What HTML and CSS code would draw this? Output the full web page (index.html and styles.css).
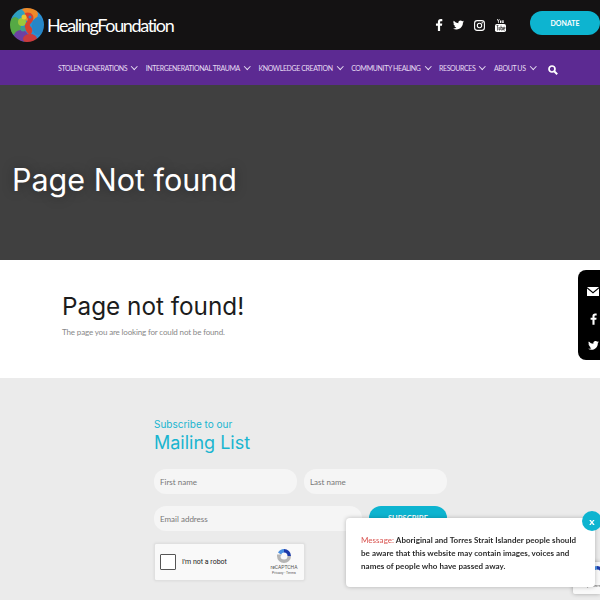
FILE: index.html
```html
<!DOCTYPE html>
<html lang="en">
<head>
    <meta charset="UTF-8">
    <meta name="viewport" content="width=device-width, initial-scale=1.0">
    <title>Page Not found</title>
    <link rel="stylesheet" href="styles.css">
</head>
<body>

    <header class="top-bar">
        <div class="logo">
            <svg class="logo-mark" width="34" height="34" viewBox="0 0 34 34">
                <defs>
                    <filter id="soft"><feGaussianBlur stdDeviation="0.5"/></filter>
                    <clipPath id="disc"><circle cx="17" cy="17" r="17"/></clipPath>
                </defs>
                <g clip-path="url(#disc)" filter="url(#soft)">
                    <rect width="34" height="34" fill="#2b8fd3"/>
                    <ellipse cx="19" cy="6" rx="9" ry="7" fill="#ee8a2c"/>
                    <ellipse cx="9" cy="7" rx="6" ry="6" fill="#2f9fc0"/>
                    <ellipse cx="5" cy="18" rx="6" ry="9" fill="#55a945"/>
                    <ellipse cx="12" cy="14" rx="4" ry="4" fill="#9cc63c"/>
                    <ellipse cx="11" cy="28" rx="7" ry="6" fill="#6d3fa3"/>
                    <ellipse cx="20" cy="31" rx="7" ry="5" fill="#c93a3c"/>
                    <ellipse cx="28" cy="18" rx="6" ry="9" fill="#2586c8"/>
                    <path d="M15 5C20 3 25 7 23 12C22 15 19 16 20 18C23 20 23 25 20 27C17 25 14 21 15 17C16 14 18 13 18 11C17 9 15 8 15 5Z" fill="#d8402f"/>
                    <circle cx="14" cy="9" r="2.500" fill="#e8c934"/>
                    <circle cx="20" cy="9" r="1.500" fill="#2f86c9"/>
                    <circle cx="13" cy="21" r="2.500" fill="#3f9c8f"/>
                </g>
            </svg>
            <span class="logo-text">HealingFoundation</span>
        </div>
        <div class="top-right">
            <div class="social">
                <svg width="8" height="12" viewBox="0 0 8 13"><path d="M5.200 13V7.300H7.200L7.500 5H5.200V3.500C5.200 2.800 5.400 2.400 6.300 2.400H7.600V.3C7.300.2 6.600.1 5.800.1 4 .1 2.800 1.200 2.800 3.200V5H.7V7.300H2.800V13Z" fill="#fff"/></svg>
                <svg width="11" height="10" viewBox="0 0 24 20"><path d="M24 2.400A10 10 0 0 1 21.200 3.200 4.900 4.900 0 0 0 23.300.5 9.800 9.800 0 0 1 20.200 1.700 4.900 4.900 0 0 0 11.800 6.200 14 14 0 0 1 1.700.9 4.900 4.900 0 0 0 3.200 7.500 4.900 4.900 0 0 1 1 6.900C1 9.300 2.700 11.300 5 11.800A4.900 4.900 0 0 1 2.800 11.900 4.900 4.900 0 0 0 7.400 15.300 9.900 9.900 0 0 1 0 17.400 14 14 0 0 0 7.500 19.600C16.600 19.600 21.600 12 21.600 5.500V4.900A10 10 0 0 0 24 2.400Z" fill="#fff"/></svg>
                <svg width="11" height="11" viewBox="0 0 11 11"><rect x=".6" y=".6" width="9.800" height="9.800" rx="2.600" fill="none" stroke="#fff" stroke-width="1.100"/><circle cx="5.500" cy="5.500" r="2.200" fill="none" stroke="#fff" stroke-width="1.100"/><circle cx="8.200" cy="2.800" r=".7" fill="#fff"/></svg>
                <svg width="11" height="13" viewBox="0 0 11 13">
                    <path d="M2 0L3 2.500V4H3.700V2.500L4.700 0H4L3.400 1.700 2.800 0ZM5 1.500V3.400C5 3.800 5.300 4 5.700 4S6.400 3.800 6.400 3.400V1.500ZM7 1.200V4H7.600L8 3.700 8.300 4H8.800V1.200H8.200V3.300L7.700 3.500V1.200Z" fill="#fff"/>
                    <rect x="0" y="5" width="11" height="8" rx="1.800" fill="#fff"/>
                    <path d="M1.500 6.500H3.500M2.500 6.500V11.500M4 8V11H5V8M6 6.500V11H7.500V8.500H6M8.500 9.500H10V8.300H8.500V11H10" stroke="#141213" stroke-width=".6" fill="none"/>
                </svg>
            </div>
            <a class="donate" href="#">DONATE</a>
        </div>
    </header>

    <nav class="main-nav">
        <a class="nav-item" href="#">Stolen Generations<span class="caret"></span></a>
        <a class="nav-item" href="#">Intergenerational Trauma<span class="caret"></span></a>
        <a class="nav-item" href="#">Knowledge Creation<span class="caret"></span></a>
        <a class="nav-item" href="#">Community Healing<span class="caret"></span></a>
        <a class="nav-item" href="#">Resources<span class="caret"></span></a>
        <a class="nav-item" href="#">About Us<span class="caret"></span></a>
        <svg class="search" width="10" height="10" viewBox="0 0 10 10"><circle cx="4" cy="4" r="3" fill="none" stroke="#fff" stroke-width="1.700"/><path d="M6.200 6.200L9.200 9.200" stroke="#fff" stroke-width="2"/></svg>
    </nav>

    <section class="hero">
        <h1>Page Not found</h1>
    </section>

    <section class="content">
        <h2>Page not found!</h2>
        <p>The page you are looking for could not be found.</p>
    </section>

    <section class="subscribe">
        <div class="subscribe-form">
            <h4>Subscribe to our</h4>
            <h3>Mailing List</h3>
            <div class="form-row">
                <input class="field" type="text" placeholder="First name">
                <input class="field" type="text" placeholder="Last name">
            </div>
            <div class="form-row">
                <input class="field field-email" type="email" placeholder="Email address">
                <button class="subscribe-btn">SUBSCRIBE</button>
            </div>
            <div class="captcha">
                <span class="captcha-box"></span>
                <span class="captcha-label">I'm not a robot</span>
                <div class="captcha-logo">
                    <svg width="16" height="16" viewBox="0 0 16 16">
                        <path d="M8 1A7 7 0 0 1 15 8H11.500A3.500 3.500 0 0 0 8 4.500Z" fill="#1c3aa9"/>
                        <path d="M8 1A7 7 0 0 0 2 4.500L5 6.500A3.500 3.500 0 0 1 8 4.500Z" fill="#4a90e2"/>
                        <path d="M1 8A7 7 0 0 0 15 8H11.500A3.500 3.500 0 0 1 4.500 8L6 6.500H1Z" fill="#b5b5b5"/>
                    </svg>
                    <span class="captcha-name">reCAPTCHA</span>
                    <span class="captcha-terms">Privacy - Terms</span>
                </div>
            </div>
        </div>
    </section>

    <div class="side-tab">
        <svg width="12" height="9" viewBox="0 0 12 9"><path d="M0 0H12L6 5Z" fill="#fff"/><path d="M0 1.500V9H12V1.500L6 6.500Z" fill="#fff"/></svg>
        <svg width="7" height="12" viewBox="0 0 8 13"><path d="M5.200 13V7.300H7.200L7.500 5H5.200V3.500C5.200 2.800 5.400 2.400 6.300 2.400H7.600V.3C7.300.2 6.600.1 5.800.1 4 .1 2.800 1.200 2.800 3.200V5H.7V7.300H2.800V13Z" fill="#fff"/></svg>
        <svg width="11" height="9" viewBox="0 0 24 20"><path d="M24 2.400A10 10 0 0 1 21.200 3.200 4.900 4.900 0 0 0 23.300.5 9.800 9.800 0 0 1 20.200 1.700 4.900 4.900 0 0 0 11.800 6.200 14 14 0 0 1 1.700.9 4.900 4.900 0 0 0 3.200 7.500 4.900 4.900 0 0 1 1 6.900C1 9.300 2.700 11.300 5 11.800A4.900 4.900 0 0 1 2.800 11.900 4.900 4.900 0 0 0 7.400 15.300 9.900 9.900 0 0 1 0 17.400 14 14 0 0 0 7.500 19.600C16.600 19.600 21.600 12 21.600 5.500V4.900A10 10 0 0 0 24 2.400Z" fill="#fff"/></svg>
    </div>

    <div class="badge">
        <svg class="badge-logo" width="16" height="16" viewBox="0 0 16 16">
            <path d="M8 1A7 7 0 0 1 15 8H11.500A3.500 3.500 0 0 0 8 4.500Z" fill="#1c3aa9"/>
            <path d="M8 1A7 7 0 0 0 2 4.500L5 6.500A3.500 3.500 0 0 1 8 4.500Z" fill="#4a90e2"/>
        </svg>
        <span class="badge-terms">Privacy - Terms</span>
    </div>

    <div class="message">
        <p><span class="message-label">Message:</span> Aboriginal and Torres Strait Islander people should be aware that this website may contain images, voices and names of people who have passed away.</p>
        <button class="message-close">x</button>
    </div>

</body>
</html>
```

FILE: styles.css
```css
html, body {
    height: 100%;
}

body {
    margin: 0;
    font-family: "Lato", Arial, sans-serif;
    background-color: #ebebeb;
    overflow: hidden;
}

.top-bar {
    height: 50px;
    background-color: #141213;
    display: flex;
    justify-content: space-between;
    align-items: center;
}

.logo {
    display: flex;
    align-items: center;
    padding-left: 10px;
}

.logo-text {
    color: #fff;
    font-size: 18px;
    font-weight: 400;
    letter-spacing: -1.35px;
    margin-left: 3px;
}

.top-right {
    display: flex;
    align-items: center;
}

.social {
    display: flex;
    align-items: center;
    gap: 10px;
    margin-right: 24px;
}

.donate {
    width: 70px;
    height: 24px;
    line-height: 24px;
    margin-bottom: 4px;
    text-align: center;
    background-color: #0db4d0;
    color: #fff;
    font-size: 7px;
    font-weight: 700;
    text-decoration: none;
    border-radius: 12px;
}

.main-nav {
    height: 35px;
    background-color: #5c2a92;
    display: flex;
    align-items: center;
    padding-left: 58px;
}

.nav-item {
    color: #e6dcf2;
    font-size: 7px;
    text-transform: uppercase;
    text-decoration: none;
    letter-spacing: -0.38px;
    margin-right: 9px;
    white-space: nowrap;
}

.caret {
    display: inline-block;
    width: 3.500px;
    height: 3.500px;
    margin-left: 5px;
    margin-bottom: 2px;
    border-right: 1px solid #e6dcf2;
    border-bottom: 1px solid #e6dcf2;
    transform: rotate(45deg);
}

.search {
    margin: 5px 0 0 4px;
}

.hero {
    height: 175px;
    background-color: #404040;
    display: flex;
    align-items: center;
    padding-left: 12px;
}

.hero h1 {
    margin: 13px 0 0;
    color: #fff;
    font-family: "Inter", Arial, sans-serif;
    font-size: 30.500px;
    font-weight: 400;
    text-shadow: 0 0 12px rgba(0, 0, 0, 0.4);
}

.content {
    height: 118px;
    background-color: #fff;
    padding-left: 62px;
    box-sizing: border-box;
    padding-top: 31px;
}

.content h2 {
    margin: 0;
    color: #1c1c1c;
    font-family: "Inter", Arial, sans-serif;
    font-size: 24.300px;
    font-weight: 400;
    line-height: 30px;
}

.content p {
    margin: 6px 0 0;
    color: #888;
    font-size: 8px;
    letter-spacing: -0.15px;
}

.subscribe {
    padding: 39px 0 0 154px;
}

.subscribe-form {
    width: 293px;
}

.subscribe-form h4 {
    margin: 0;
    color: #19b5d0;
    font-family: "Inter", Arial, sans-serif;
    font-size: 10px;
    font-weight: 400;
    line-height: 14px;
}

.subscribe-form h3 {
    margin: 1px 0 15px;
    color: #19b5d0;
    font-family: "Inter", Arial, sans-serif;
    font-size: 18px;
    font-weight: 400;
    line-height: 22px;
}

.form-row {
    display: flex;
    gap: 7px;
    margin-bottom: 12px;
}

.field {
    flex: 1;
    min-width: 0;
    height: 25px;
    box-sizing: border-box;
    border: none;
    border-radius: 12px;
    background-color: #f5f5f5;
    padding: 0 6px;
    font-family: "Lato", Arial, sans-serif;
    font-size: 8px;
}

.field::placeholder {
    color: #777;
}

.field-email {
    flex: none;
    width: 208px;
}

.subscribe-btn {
    flex: 1;
    border: none;
    border-radius: 12px;
    background-color: #0db4d0;
    color: #fff;
    font-family: "Lato", Arial, sans-serif;
    font-size: 7.500px;
    font-weight: 700;
}

.captcha {
    width: 151px;
    height: 38px;
    box-sizing: border-box;
    background-color: #f9f9f9;
    border: 1px solid #e0e0e0;
    border-radius: 2px;
    box-shadow: 0 0 3px rgba(0, 0, 0, 0.08);
    display: flex;
    align-items: center;
    padding-left: 5px;
}

.captcha-box {
    width: 14px;
    height: 14px;
    background-color: #fff;
    border: 1px solid #555;
    border-radius: 1px;
}

.captcha-label {
    margin-left: 6px;
    font-family: "Roboto", Arial, sans-serif;
    font-size: 7px;
    color: #222;
}

.captcha-logo {
    margin-left: auto;
    width: 30px;
    display: flex;
    flex-direction: column;
    align-items: center;
    padding-right: 5px;
    font-family: "Roboto", Arial, sans-serif;
    color: #555;
}

.captcha-name {
    font-size: 5px;
    line-height: 7px;
    white-space: nowrap;
}

.captcha-terms {
    font-size: 3.500px;
    line-height: 5px;
    white-space: nowrap;
}

.side-tab {
    position: fixed;
    top: 270px;
    right: 0;
    width: 22px;
    height: 90px;
    box-sizing: border-box;
    background-color: #000;
    border-radius: 8px 0 0 8px;
    display: flex;
    flex-direction: column;
    align-items: center;
    justify-content: space-between;
    padding: 17px 0 10px 8px;
}

.badge {
    position: fixed;
    top: 562px;
    right: 0;
    width: 27px;
    height: 32px;
    box-sizing: border-box;
    background-color: #f9f9f9;
    border-radius: 2px 0 0 2px;
    box-shadow: 0 0 4px rgba(0, 0, 0, 0.3);
    padding: 3px 0 0 3px;
    overflow: hidden;
}

.badge-logo {
    display: block;
    margin-left: 13px;
}

.badge-terms {
    display: block;
    margin-top: 2px;
    font-family: "Roboto", Arial, sans-serif;
    font-size: 4px;
    color: #555;
    white-space: nowrap;
}

.message {
    position: fixed;
    top: 518px;
    left: 346px;
    width: 249px;
    height: 69px;
    box-sizing: border-box;
    background-color: #fff;
    border-radius: 4px;
    box-shadow: 0 0 4px rgba(0, 0, 0, 0.25);
    padding: 16px 15px 0 15px;
}

.message p {
    margin: 0;
    color: #2b2b2b;
    font-size: 8px;
    font-weight: 700;
    letter-spacing: 0.04px;
    line-height: 13px;
}

.message-label {
    color: #d9534f;
    font-weight: 400;
}

.message-close {
    position: absolute;
    top: -7px;
    right: -7px;
    width: 20px;
    height: 20px;
    padding: 0;
    border: none;
    border-radius: 50%;
    background-color: #0db4d0;
    color: #fff;
    font-family: "Lato", Arial, sans-serif;
    font-size: 10px;
    font-weight: 900;
}
```
